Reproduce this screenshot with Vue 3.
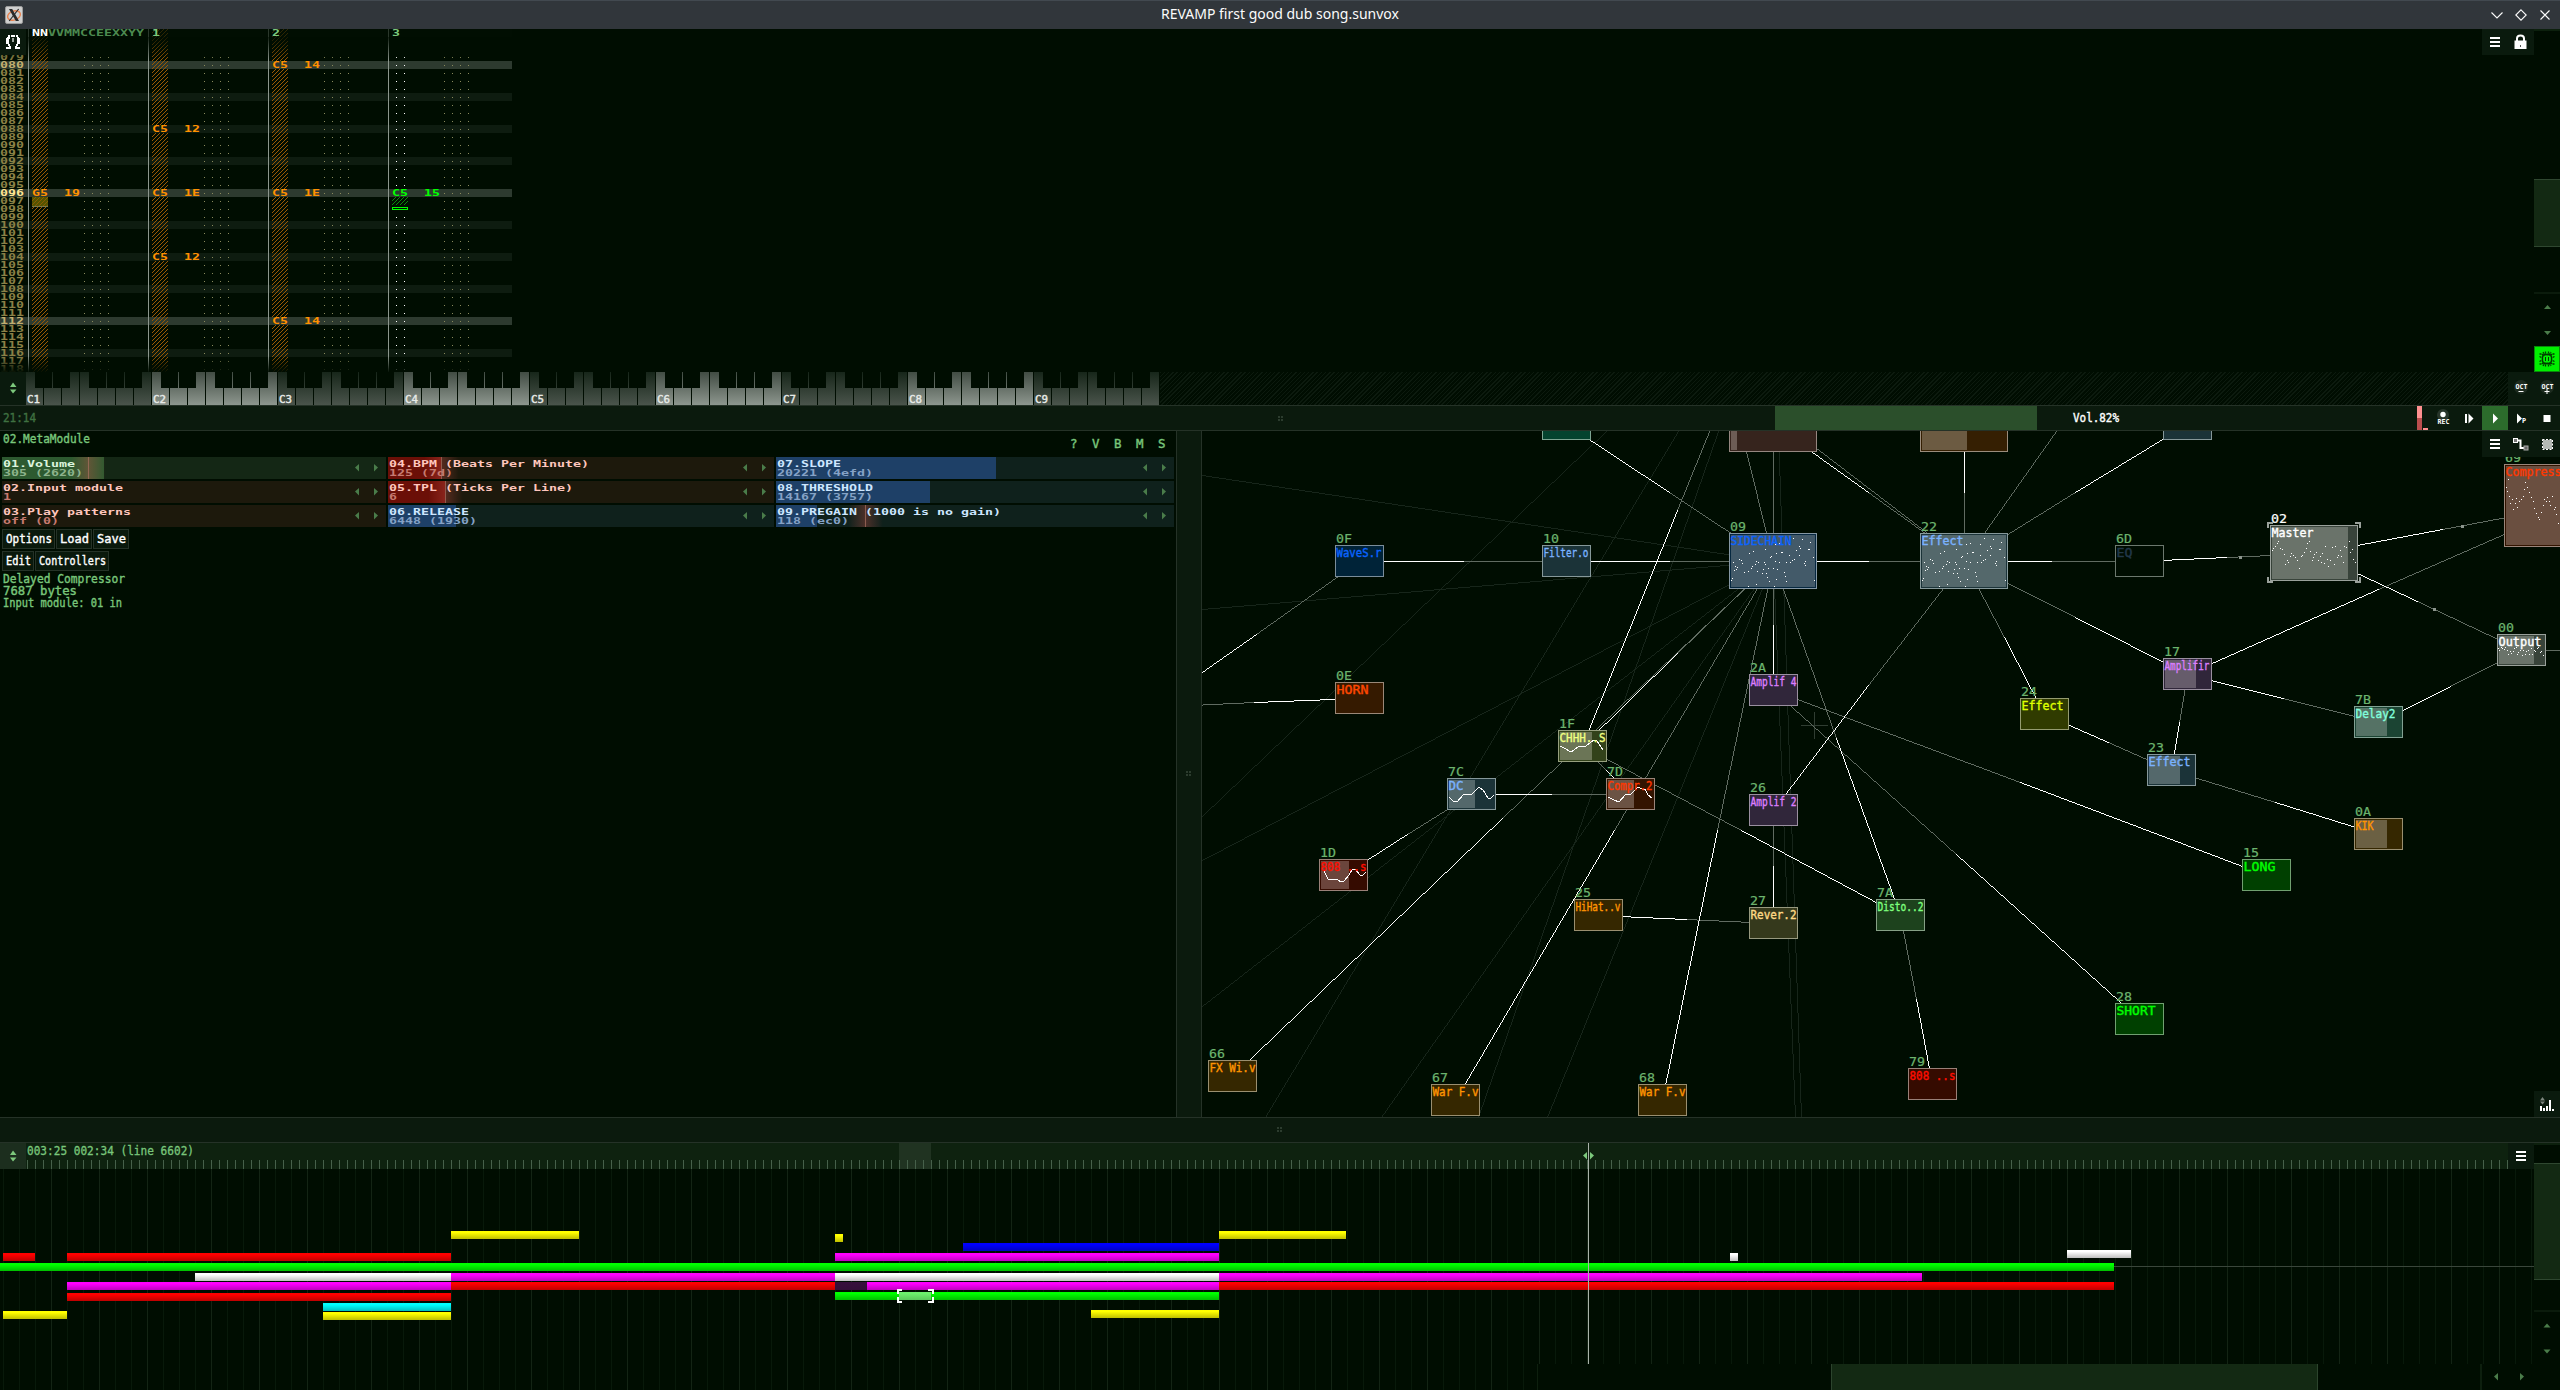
<script setup>
import { h } from 'vue'

// Stretched label: text t fitted to width w. wide = 8x8 fixed cell lettering.
const Px = (p) =>
  h('svg', { class: ['px', p.wide ? 'px-wide' : 'px-tall'], width: p.w + 2, height: p.h || 12 }, [
    h('text', { x: 0, y: p.b || 10, textLength: p.w, lengthAdjust: 'spacingAndGlyphs' }, p.t),
  ])
Px.props = { t: String, w: Number, h: Number, b: Number, wide: Boolean }

/* ---------- pattern editor ---------- */
const rows = Array.from({ length: 40 }, (_, i) => {
  const n = 79 + i
  return {
    n: String(n).padStart(3, '0'),
    y: 32 + (n - 80) * 8,
    beat: n % 4 === 0,
    bar: n % 16 === 0,
    now: n === 96,
  }
})
const tracks = [0, 1, 2, 3].map((i) => ({ x: 28 + i * 120, i }))
const notes = [
  [152, 88, 'C5', '12'], [152, 96, 'C5', '1E'], [152, 104, 'C5', '12'],
  [272, 80, 'C5', '14'], [272, 96, 'C5', '1E'], [272, 112, 'C5', '14'],
  [32, 96, 'G5', '19'], [392, 96, 'C5', '15', 'lime'],
].map(([x, r, a, b, c]) => ({ x, y: 39 + (r - 80) * 8, bar: r % 16 === 0, a, b, c: c ? '#00ff00' : '#ff9100' }))

const octaves = Array.from({ length: 9 }, (_, i) => i + 1)

/* ---------- controllers ---------- */
const controllers = [
  [
    { name: '01.Volume', val: '305 (2620)', kind: 'green', fill: 102, mark: 86 },
    { name: '02.Input module', val: '1', kind: 'red', fill: 0 },
    { name: '03.Play patterns', val: 'off (0)', kind: 'red', fill: 0 },
  ],
  [
    { name: '04.BPM (Beats Per Minute)', val: '125 (7d)', kind: 'red', fill: 53, mark: 53 },
    { name: '05.TPL (Ticks Per Line)', val: '6', kind: 'red', fill: 57, mark: 57 },
    { name: '06.RELEASE', val: '6448 (1930)', kind: 'blue', fill: 68 },
  ],
  [
    { name: '07.SLOPE', val: '20221 (4efd)', kind: 'blue', fill: 220 },
    { name: '08.THRESHOLD', val: '14167 (3757)', kind: 'blue', fill: 154 },
    { name: '09.PREGAIN (1000 is no gain)', val: '118 (ec0)', kind: 'blue', fill: 41, mark: 89 },
  ],
]
const flags = ['?', 'V', 'B', 'M', 'S']
const buttons = [
  [{ t: 'Options', w: 46, box: 53 }, { t: 'Load', w: 29, box: 36 }, { t: 'Save', w: 29, box: 36 }],
  [{ t: 'Edit', w: 25, box: 32 }, { t: 'Controllers', w: 67, box: 74 }],
]

/* ---------- modules ---------- */
const OR = ['#352700', '#ff9400', '#9a8f70']
const BL = ['#1b3338', '#7ab2ff', '#86989a']
const node = (id, x, y, name, tw, [fill, ink, line], o = {}) => ({ id, x, y, name, tw, fill, ink, line, w: 49, h: 32, ...o })
const PU = ['#30263a', '#dd7eff', '#9a8fa0']
const GR = ['#004000', '#00ff00', '#70a070']
const nodes = [
  node('', 1542, 408, '', 0, ['#04432f', '#fff', '#7da593']),
  node('', 1729, 396, '', 0, ['#36241d', '#fff', '#958680'], { w: 88, h: 56, lv: 6, lc: '#6d5d56' }),
  node('', 1920, 396, '', 0, ['#351f02', '#fff', '#9a8c7c'], { w: 88, h: 56, lv: 45, lc: '#6c5b42' }),
  node('', 2163, 408, '', 0, BL),
  node('0F', 1335, 545, 'WaveS.r', 45, ['#002338', '#0a64ff', '#7a8d9a']),
  node('10', 1542, 545, 'Filter.o', 45, BL),
  node('09', 1729, 533, 'SIDECHAIN', 61, ['#062840', '#0a64ff', '#8597a4'], { w: 88, h: 56, lv: 84, lc: '#435a69', dots: 'a' }),
  node('0E', 1335, 682, 'HORN', 32, ['#351a00', '#ff4800', '#9a8878']),
  node('1F', 1558, 730, 'CHHH..S', 46, ['#32421a', '#eeff80', '#97a07f'], { lv: 32, lc: '#6b7556', wave: '2,16 6,18 13,22 20,17 28,16 36,10 39,11 45,20' }),
  node('7C', 1447, 778, 'DC', 15, BL, { lv: 26, lc: '#54686b', wave: '2,19 6,23 10,24 17,16 25,16 32,9 36,12 41,20 44,20 47,17' }),
  node('7D', 1606, 778, 'Compr.2', 45, ['#331400', '#ff3800', '#9a857a'], { lv: 26, lc: '#6b5344', wave: '2,19 8,22 13,24 20,16 25,16 32,9 36,11 39,11 42,17 46,20' }),
  node('2A', 1749, 674, 'Amplif 4', 46, PU),
  node('26', 1749, 794, 'Amplif 2', 46, PU),
  node('27', 1749, 907, 'Rever.2', 46, ['#35391c', '#ffd985', '#97997f']),
  node('25', 1574, 899, 'HiHat..v', 45, OR),
  node('1D', 1319, 859, '808 ..s', 46, ['#350b00', '#ff0d00', '#9a8078'], { lv: 28, lc: '#6b453c', wave: '5,12 9,20 19,21 22,23 25,22 30,16 33,11 36,10 41,16 44,16 47,13' }),
  node('66', 1208, 1060, 'FX Wi.v', 46, OR),
  node('67', 1431, 1084, 'War F.v', 46, OR),
  node('68', 1638, 1084, 'War F.v', 46, OR),
  node('22', 1920, 533, 'Effect', 42, BL, { w: 88, h: 56, lv: 84, lc: '#54686b', dots: 'a' }),
  node('6D', 2115, 545, 'EQ', 16, ['#000d01', '#22384a', '#6c786e']),
  node('02', 2270, 525, 'Master', 42, ['#38433a', '#ffffff', '#9aa19b'], { w: 88, h: 56, lv: 76, lc: '#6a736a', dots: 'm', sel: true }),
  node('69', 2504, 464, 'Compress', 56, ['#331400', '#ff3800', '#9a857a'], { w: 132, h: 83, lv: 128, lc: '#6a4f40', dots: 'c' }),
  node('17', 2163, 658, 'Amplifir', 45, PU, { lv: 31, lc: '#665c6b' }),
  node('24', 2020, 698, 'Effect', 42, ['#303b00', '#dfff00', '#959c70']),
  node('23', 2147, 754, 'Effect', 42, BL, { lv: 31, lc: '#54686b' }),
  node('7B', 2354, 706, 'Delay2', 40, ['#1b4433', '#80ffdc', '#82a193'], { lv: 31, lc: '#557265' }),
  node('0A', 2354, 818, 'KIK', 18, OR, { lv: 31, lc: '#6b6043' }),
  node('15', 2242, 859, 'LONG', 32, GR),
  node('28', 2115, 1003, 'SHORT', 39, GR),
  node('7A', 1876, 899, 'Disto..2', 46, ['#1d421d', '#7dff7d', '#86a086']),
  node('79', 1908, 1068, '808 ..s', 46, ['#350b00', '#ff0d00', '#9a8078']),
  node('00', 2497, 634, 'Output', 43, ['#38433a', '#ffffff', '#9aa19b'], { lv: 35, lc: '#6a736a', dots: 'o' }),
]
const at = (k) => {
  if (Array.isArray(k)) return k
  const n = nodes.find((m) => m.id === k)
  return [n.x + n.w / 2, n.y + n.h / 2]
}
// One-pixel line as a path of whole-pixel runs.
const raster = (x1, y1, x2, y2) => {
  x1 = Math.floor(x1); y1 = Math.floor(y1); x2 = Math.floor(x2); y2 = Math.floor(y2)
  const steep = Math.abs(y2 - y1) > Math.abs(x2 - x1)
  let [a1, b1, a2, b2] = steep ? [y1, x1, y2, x2] : [x1, y1, x2, y2]
  if (a1 > a2) [a1, b1, a2, b2] = [a2, b2, a1, b1]
  const k = a2 === a1 ? 0 : (b2 - b1) / (a2 - a1)
  let d = ''
  let from = a1
  let cur = b1
  for (let a = a1; a <= a2 + 1; a++) {
    const b = Math.round(b1 + k * (a - a1))
    if (b !== cur || a > a2) {
      const len = a - from
      if (len > 0) d += steep ? `M${cur} ${from}h1v${len}h-1z` : `M${from} ${cur}h${len}v1h${-len}z`
      from = a
      cur = b
    }
  }
  return d
}
const A = [1566.5, 424], B = [1773, 424], C = [1964, 424], D = [2187.5, 424]
// signal goes from the first end: bright up to the middle, dim after it
const wires = [
  [A, '09'], [[1152.5, 707], '0F'], ['0F', '10'], ['10', '09'], ['09', '22'], ['0E', [1150, 707]],
  [B, '22'], [C, '22'], [D, '22'], ['22', '6D'], ['17', '22'], ['24', '22'], ['26', '22'],
  ['24', '23'], ['23', '17'], ['0A', '23'], ['17', '7B'], ['7B', '00'], ['17', '69'], ['02', '69'],
  ['6D', '02'], ['02', '00'], ['66', '09'], ['1F', '09'], ['1F', [1773, 274]], ['7D', '1F'], ['7A', '1F'],
  ['7C', '7D'], ['1D', '7C'], ['67', '09'], ['68', '09'], ['25', '27'], ['27', '26'], ['7A', '09'],
  ['15', '2A'], ['28', '2A'], ['79', '7A'], ['2A', '09'],
].map(([a, b]) => {
  const [x1, y1] = at(a), [x2, y2] = at(b)
  const mx = (x1 + x2) / 2, my = (y1 + y2) / 2
  return { bright: raster(x1, y1, mx, my), dim: raster(mx, my, x2, y2) }
})
const dimWires = [
  [1773, 440, 1773, 561], [1741, 431, 1773, 561], [1794, 431, 1964, 561], [2056, 431, 1964, 561], [2546, 650, 2560, 650],
].map((l) => raster(...l)).join('')
const ghostWires = [
  [1202, 475.5, 1773, 561], [1202, 609, 1773, 561], [1606, 431, 1202, 816], [1678.5, 431, 1265, 1117],
  [1718, 431, 1478, 1117], [1773, 561, 1202, 860], [1773, 561, 1202, 1006], [1773, 561, 1381, 1117],
  [1773, 561, 1547, 1117], [1778.5, 431, 1801, 1117], [1773, 561, 1795.5, 1117],
].map((l) => raster(...l)).join('')
const pts = (s, ox, oy, kx, ky) =>
  s.split(' ').map((p) => {
    const [x, y] = p.split(',').map(Number)
    return [Math.round((x - ox) / kx), Math.round((y - oy) / ky)]
  })
const scopes = {
  a: pts('823,115 850,118 874,126 810,134 782,131 768,134 842,140 845,146 868,149 870,149 832,152 740,148 703,154 690,160 786,157 789,157 773,160 755,172 758,170 812,165 842,165 882,172 660,178 667,182 643,187 671,190 711,184 718,187 708,193 736,187 738,194 770,184 781,187 802,187 814,187 827,178 820,182 858,184 855,190 858,196 650,199 655,203 652,208 647,211 697,205 699,199 748,206 733,208 715,214 687,214 677,217 729,220 742,220 762,205 775,208 796,217 800,229 745,232 752,244 803,244 772,238 640,235 637,241 712,253 687,259 767,259 886,241', 631, 100, 3, 3),
  m: pts('923,452 926,444 930,438 934,430 938,424 942,444 946,448 950,462 953,492 957,480 960,488 963,470 967,460 971,467 975,473 980,482 984,505 988,470 991,465 995,456 999,445 1003,430 1007,424 1008,455 1012,482 1015,472 1018,462 1022,458 1026,480 1030,470 1033,486 1036,460 1040,490 1043,440 1047,478 1050,498 1054,482 1058,442 1062,492 1065,440 1068,472 1072,465 1075,450 1079,470 1082,488 1085,440 1090,443 1096,424 1099,456 1102,447 1106,478 1109,486', 919, 376, 2.24, 3),
  c: pts('1448,262 1453,238 1451,275 1455,290 1458,312 1461,300 1465,328 1468,310 1471,295 1474,322 1478,306 1482,300 1486,290 1489,268 1492,248 1496,262 1500,278 1504,292 1508,305 1512,325 1516,340 1520,352 1523,360 1526,338 1531,318 1534,300 1537,305 1541,293 1544,305 1548,318 1551,290 1555,330 1558,322 1561,345 1564,372', 1444, 194, 2.24, 3),
  o: pts('1430,745 1433,752 1436,741 1440,746 1443,748 1447,741 1450,752 1453,764 1457,755 1460,760 1464,754 1467,745 1470,741 1473,762 1476,757 1480,752 1484,765 1487,750 1490,764 1493,755 1497,750 1500,764 1504,744 1507,762 1510,750 1514,754 1517,744 1520,741 1524,756 1527,754 1530,765', 1428, 703, 2.24, 3),
}

/* ---------- timeline ---------- */
const ticks = Array.from({ length: 311 }, (_, i) => 27 + i * 8)
const grid = Array.from({ length: 159 }, (_, i) => 3 + i * 16)
const strong = (x) => [51, 99, 147].includes(x % 160)
const Y = 'yellow', R = 'red', G = 'green', M = 'magenta', W = 'white'
const clips = [
  [451, 579, 1231, Y], [835, 843, 1234, Y], [1219, 1346, 1231, Y], [963, 1219, 1243, 'blue'],
  [3, 35, 1253, R], [67, 451, 1253, R], [835, 1219, 1253, M], [0, 2114, 1263, G],
  [195, 451, 1273, W], [451, 835, 1273, M], [835, 1219, 1273, W], [1219, 1922, 1273, M],
  [67, 451, 1282, M], [451, 835, 1282, R], [835, 867, 1282, 'muted'], [867, 1219, 1282, M], [1219, 2114, 1282, R],
  [67, 451, 1293, R], [835, 1219, 1292, G], [899, 931, 1292, 'picked'],
  [323, 451, 1303, 'cyan'], [323, 451, 1312, Y], [3, 67, 1311, Y], [1091, 1219, 1310, Y],
  [1730, 1738, 1253, W], [2067, 2131, 1250, W],
].map(([a, b, y, c]) => ({ x: a, w: b - a, y: y - 1143, c }))
const clipColors = {
  yellow: ['#ffff00', '#bfbf00'], red: ['#ff0000', '#bf0000'], green: ['#00ff00', '#00bf00'],
  magenta: ['#ff00ff', '#bf00bf'], white: ['#ffffff', '#bfbfbf'], blue: ['#0000ff', '#0000bf'],
  cyan: ['#00ffff', '#00bfbf'], muted: ['#37103c', '#330f38'], picked: ['#6cf06c', '#5bc85b'],
}
</script>

<template>
  <div class="app">
    <header class="title">
      <svg class="xlogo" width="18" height="18" viewBox="0 0 18 18">
        <rect x="0.5" y="0.5" width="17" height="17" rx="1.5" fill="#cfcfcf" stroke="#9b9b9b" />
        <ellipse cx="9" cy="9.5" rx="6.6" ry="4.4" fill="none" stroke="#e8824e" stroke-width="1.4" transform="rotate(-20 9 9.5)" />
        <path d="M4 3h3.200L14 15h-3.200z" fill="#2a2a2a" />
        <path d="M13.600 3L4.200 15" stroke="#2a2a2a" stroke-width="1.200" />
      </svg>
      <span class="title-text">REVAMP first good dub song.sunvox</span>
      <svg class="winbtns" width="64" height="14" viewBox="0 0 64 14" fill="none" stroke="#fcfcfc" stroke-width="1.100">
        <path d="M2.500 4.500l5.500 5.500 5.500-5.500" /><path d="M32 1.800l5.200 5.200-5.200 5.200-5.200-5.200z" />
        <path d="M51.500 2.500l9 9M60.500 2.500l-9 9" />
      </svg>
    </header>

    <section class="pattern">
      <svg class="grid" width="2482" height="343" shape-rendering="crispEdges">
        <defs>
          <pattern id="hatchO" width="4" height="4" patternUnits="userSpaceOnUse">
            <path d="M3 0h1v1h-1zM2 1h1v1h-1zM1 2h1v1h-1zM0 3h1v1h-1z" fill="#9c5a04" />
          </pattern>
          <pattern id="hatchG" width="4" height="4" patternUnits="userSpaceOnUse">
            <path d="M3 0h1v1h-1zM2 1h1v1h-1zM1 2h1v1h-1zM0 3h1v1h-1z" fill="#0c8a0c" />
          </pattern>
          <linearGradient id="fadeT" x1="0" y1="0" x2="0" y2="1"><stop offset="0" stop-color="#000d01" stop-opacity="0.85" /><stop offset="1" stop-color="#000d01" stop-opacity="0" /></linearGradient>
          <linearGradient id="fadeB" x1="0" y1="0" x2="0" y2="1"><stop offset="0" stop-color="#000d01" stop-opacity="0" /><stop offset="1" stop-color="#000d01" stop-opacity="0.95" /></linearGradient>
        </defs>
        <template v-for="r in rows" :key="r.n">
          <rect v-if="r.beat" x="0" :y="r.y" width="512" height="8" :fill="r.bar ? '#2d3a2f' : '#0e1c10'" />
        </template>
        <g v-for="t in tracks" :key="t.i">
          <rect :x="t.x" y="0" width="1" height="343" fill="#8c968d" />
          <rect v-if="t.i < 3" :x="t.x + 4" y="0" width="16" height="343" fill="url(#hatchO)" />
          <g v-for="r in rows" :key="r.n">
            <path :d="`M${t.x + 56} ${r.y + 4}h1v1h-1zM${t.x + 64} ${r.y + 4}h1v1h-1zM${t.x + 72} ${r.y + 4}h1v1h-1zM${t.x + 80} ${r.y + 4}h1v1h-1z`" fill="#8a8a5c" />
            <path v-if="t.i === 3 && !['096', '097', '098'].includes(r.n)" :d="`M${t.x + 8} ${r.y + 4}h1v1h-1zM${t.x + 16} ${r.y + 4}h1v1h-1z`" fill="#fff" />
          </g>
        </g>
        <rect v-for="(n, i) in notes" :key="'b' + i" :x="n.x" :y="n.y - 7" width="16" height="8" :fill="n.bar ? '#2d3a2f' : '#0e1c10'" />
        <rect x="32" y="168" width="16" height="10" fill="#5c5c00" fill-opacity="0.9" />
        <rect x="32" y="168" width="16" height="9" fill="url(#hatchO)" opacity="0.7" />
        <rect x="32" y="177" width="16" height="1" fill="#77774a" />
        <rect x="392" y="168" width="16" height="8" fill="url(#hatchG)" />
        <rect x="392.500" y="178.500" width="15" height="2" fill="none" stroke="#00ff00" />
        <g class="cells">
          <text v-for="r in rows" :key="r.n" x="0" :y="r.y + 7" textLength="24" lengthAdjust="spacingAndGlyphs" :fill="r.now ? '#ffe493' : r.bar ? '#c2af70' : '#8a8046'">{{ r.n }}</text>
          <g v-for="(n, i) in notes" :key="i" :fill="n.c">
            <text :x="n.x" :y="n.y" textLength="16" lengthAdjust="spacingAndGlyphs">{{ n.a }}</text>
            <text :x="n.x + 32" :y="n.y" textLength="16" lengthAdjust="spacingAndGlyphs">{{ n.b }}</text>
          </g>
        </g>
        <rect x="0" y="0" width="512" height="8" fill="#020f03" fill-opacity="0.7" />
        <rect x="0" y="8" width="512" height="24" fill="url(#fadeT)" />
        <rect x="0" y="327" width="512" height="16" fill="url(#fadeB)" />
        <g class="cells heads">
          <text x="32" y="7" textLength="16" lengthAdjust="spacingAndGlyphs" fill="#fff">NN</text>
          <text x="48" y="7" textLength="96" lengthAdjust="spacingAndGlyphs" fill="#4c8a50">VVMMCCEEXXYY</text>
          <text v-for="k in 3" :key="k" :x="32 + 120 * k" y="7" textLength="8" lengthAdjust="spacingAndGlyphs" fill="#7cc87c">{{ k }}</text>
        </g>
        <rect x="0" y="0" width="26" height="26" fill="#0a1a0d" />
        <path d="M8 6h2v2h-2zM11 6h4v2h-4zM16 6h2v2h-2zM7 8h3v2h-3zM6 9h3v6h-3zM17 8h2v1h-2zM17 9h3v6h-3zM8 15h2v2h-2zM16 15h2v2h-2zM9 17h2v2h-2zM15 17h2v2h-2zM6 18h5v2h-5zM15 18h5v2h-5z" fill="#fff" />
        <path d="M12 9h2v4h-2z" fill="#9aa29b" />
      </svg>
      <div class="iconbar">
        <svg class="ic" viewBox="0 0 26 26"><path d="M8 8h10v2H8zM8 12h10v2H8zM8 16h10v2H8z" fill="#fff" /></svg>
        <svg class="ic" viewBox="0 0 26 26"><path d="M9 13V9.500Q9 6.500 12.500 6.500T16 9.500V13" fill="none" stroke="#fff" stroke-width="2" /><rect x="6.500" y="11.500" width="12" height="8.500" fill="#fff" /><path d="M12 16h1v2h-1z" fill="#555" /></svg>
      </div>
      <div class="vscroll">
        <div class="strip"></div>
        <div class="thumb thumb-a"></div>
        <div class="divider div-a"></div>
        <svg class="ic" viewBox="0 0 26 26"><path d="M10 15l3.500-4 3.500 4z" fill="#4a7c4a" /></svg>
        <svg class="ic" viewBox="0 0 26 26"><path d="M10 11l3.500 4 3.500-4z" fill="#4a7c4a" /></svg>
        <svg class="ic bug" viewBox="0 0 26 26">
          <rect width="26" height="26" fill="#0a8a0a" /><rect x="1" y="1" width="24" height="24" fill="#00f000" />
          <g fill="none" stroke="#013a01" stroke-width="1.300">
            <rect x="8.500" y="8.500" width="9" height="9" rx="3" />
            <path d="M9 6l1.500 2.500h5L17 6M11.500 5.500v3M14.500 5.500v3M9 20l1.500-2.500h5L17 20M11.500 20.500v-3M14.500 20.500v-3M5.500 8h2.500l2 2M20.500 8H18l-2 2M5.500 10.500l3 1.500M20.500 10.500l-3 1.500M5.500 15.500l3-1.500M20.500 15.500l-3-1.500M5.500 18H8l2-2M20.500 18H18l-2-2" stroke-dasharray="2 0.500" />
          </g>
          <path d="M11 11h1v4h-1zM14 11h1v4h-1z" fill="#013a01" />
        </svg>
      </div>
    </section>

    <section class="keyboard">
      <svg class="ic tall" viewBox="0 0 26 33"><path d="M10 15l3-4.500 3.500 4.500zM10 17.500l3 4 3.500-4z" fill="#7cc87c" /></svg>
      <div v-for="o in octaves" :key="o" class="octave">
        <svg width="126" height="33" shape-rendering="crispEdges">
          <defs>
            <linearGradient :id="'kw' + o" x1="0" y1="0" x2="0" y2="1">
              <stop offset="0" :stop-color="o % 2 ? '#17261a' : '#414c43'" /><stop offset="1" :stop-color="o % 2 ? '#4a544b' : '#8d968e'" />
            </linearGradient>
          </defs>
          <rect v-for="k in 7" :key="k" :x="(k - 1) * 18" y="0" width="17" height="33" :fill="`url(#kw${o})`" />
          <rect v-for="x in [9, 27, 63, 81, 99]" :key="x" :x="x" y="0" width="17" height="16" fill="#000d01" />
        </svg>
        <Px class="keyname" :t="'C' + o" :w="13" :h="11" :b="9" />
      </div>
      <div class="hatch"></div>
      <svg class="ic tall" viewBox="0 0 26 33"><circle cx="13" cy="15" r="7" fill="#fff" opacity="0.08" /><text x="7.500" y="16.500" textLength="12" lengthAdjust="spacingAndGlyphs" class="tiny">OCT</text><path d="M10.500 19h5v1h-5z" fill="#fff" /></svg>
      <svg class="ic tall" viewBox="0 0 26 33"><circle cx="13" cy="15" r="7" fill="#fff" opacity="0.08" /><text x="7.500" y="16.500" textLength="12" lengthAdjust="spacingAndGlyphs" class="tiny">OCT</text><path d="M10.500 19h5v1h-5zM12.500 17h1v5h-1z" fill="#fff" /></svg>
    </section>

    <section class="transport">
      <Px class="clock" t="21:14" :w="33" :h="13" :b="11" />
      <svg class="grip" width="6" height="6"><path d="M0 0h2v2H0zM3 0h2v2H3zM0 3h2v2H0zM3 3h2v2H3z" fill="#2c3c2e" /></svg>
      <div class="volbar"></div>
      <Px class="vol" t="Vol.82%" :w="46" :h="13" :b="11" />
      <svg class="meter" width="13" height="24"><path d="M0 0h5v12H0z" fill="#ff9090" /><path d="M0 12h5v12H0z" fill="#bb4e4e" /><path d="M6 22h5v2H6z" fill="#ff9090" /></svg>
      <svg class="ic" viewBox="0 0 26 24"><circle cx="13" cy="9" r="6" fill="#fff" opacity="0.12" /><circle cx="13" cy="8.500" r="2.700" fill="#fff" /><text x="7.500" y="17.500" textLength="12" lengthAdjust="spacingAndGlyphs" class="tiny">REC</text></svg>
      <svg class="ic" viewBox="0 0 26 24"><path d="M9 8h2v9H9zM12.500 7.500v10l5-5z" fill="#fff" /></svg>
      <svg class="ic playing" viewBox="0 0 26 24"><path d="M11 7.500v10l5-5z" fill="#fff" /></svg>
      <svg class="ic" viewBox="0 0 26 24"><path d="M9 7.500v10l5-5z" fill="#fff" /><text x="14" y="16.500" class="tiny">P</text></svg>
      <svg class="ic" viewBox="0 0 26 24"><path d="M9.500 9h7v7h-7z" fill="#fff" /></svg>
    </section>

    <section class="middle">
      <div class="panel">
        <div class="panel-head">
          <Px t="02.MetaModule" :w="87" :h="14" :b="12" />
          <div class="flags"><span v-for="f in flags" :key="f"><Px :t="f" :w="7.500" :h="12" :b="10" /></span></div>
        </div>
        <div class="ctls">
          <div v-for="(col, ci) in controllers" :key="ci" class="ctl-col">
            <div v-for="c in col" :key="c.name" class="ctl" :class="c.kind">
              <div class="fill" :style="{ width: c.fill + 'px' }"></div>
              <div v-if="c.mark" class="mark" :style="{ left: c.mark + 'px' }"></div>
              <div class="ctl-text">
                <Px :t="c.name" :w="c.name.length * 8" wide :h="11" :b="10" />
                <Px class="val" :t="c.val" :w="c.val.length * 8" wide :h="10" :b="8" />
              </div>
              <svg class="nudge" width="34" height="22"><path d="M5 7l-4 3.500 4 4zM20 7l4 3.500-4 4z" fill="#4a7c4a" /></svg>
            </div>
          </div>
        </div>
        <div v-for="(line, i) in buttons" :key="i" class="btns">
          <div v-for="b in line" :key="b.t" class="btn" :style="{ width: b.box + 'px' }"><Px :t="b.t" :w="b.w" :h="16" :b="11" /></div>
        </div>
        <div class="info">
          <Px t="Delayed Compressor" :w="122" :h="12" :b="10" />
          <Px t="7687 bytes" :w="74" :h="12" :b="10" />
          <Px t="Input module: 01 in" :w="119" :h="12" :b="10" />
        </div>
      </div>

      <div class="splitter"><svg width="6" height="6"><path d="M0 0h2v2H0zM3 0h2v2H3zM0 3h2v2H0zM3 3h2v2H3z" fill="#2c3c2e" /></svg></div>

      <div class="graph">
        <svg width="1358" height="686" viewBox="1202 431 1358 686" shape-rendering="crispEdges">
          <path :d="ghostWires" fill="#17251a" />
          <path d="M1801 725h27v1h-27zM1814 712h1v27h-1z" fill="#303d32" />
          <path :d="dimWires" fill="#606b61" />
          <path v-for="(w, i) in wires" :key="'e' + i" :d="w.dim" fill="#606b61" />
          <path v-for="(w, i) in wires" :key="'w' + i" :d="w.bright" fill="#fff" />
          <path d="M2239 556h3v3h-3zM2461 525h3v3h-3zM2433 608h3v3h-3z" fill="#8c958d" />
          <g v-for="(n, i) in nodes" :key="i">
            <rect :x="n.x + 0.5" :y="n.y + 0.5" :width="n.w - 1" :height="n.h - 1" :fill="n.fill" :stroke="n.line" />
            <rect v-if="n.lv" :x="n.x + 2" :y="n.y + 2" :width="n.lv" :height="n.h - 4" :fill="n.lc" />
            <path v-if="n.dots" :d="scopes[n.dots].map(([a, b]) => `M${n.x + a} ${n.y + b}h1v1h-1z`).join('')" fill="#fff" />
            <polyline v-if="n.wave" :points="n.wave" :transform="`translate(${n.x} ${n.y})`" fill="none" stroke="#fff" />
            <g v-if="n.id" class="node-text">
              <text :x="n.x + 1" :y="n.y - 2" textLength="16" lengthAdjust="spacingAndGlyphs" class="node-id" :fill="n.sel ? '#fff' : '#6cb46e'" :stroke="n.sel ? '#fff' : '#6cb46e'">{{ n.id }}</text>
              <text :x="n.x + 1.500" :y="n.y + 12" :textLength="n.tw" lengthAdjust="spacingAndGlyphs" :fill="n.ink" :stroke="n.ink">{{ n.name }}</text>
            </g>
            <path v-if="n.sel" d="M2268 528v-5h5M2355 523h5v5M2360 577v5h-5M2273 582h-5v-5" fill="none" stroke="#9aa19b" stroke-width="2" />
          </g>
        </svg>
        <div class="graph-tools">
          <svg class="ic" viewBox="0 0 26 26"><path d="M8 8h10v2H8zM8 12h10v2H8zM8 16h10v2H8z" fill="#fff" /></svg>
          <svg class="ic" viewBox="0 0 26 26"><path d="M9 9.500h3.500v7.500h4" fill="none" stroke="#fff" stroke-width="2" /><rect x="5.500" y="7.500" width="4" height="4" fill="#777" stroke="#fff" /><rect x="16" y="15" width="4" height="4" fill="#666" stroke="#aaa" /></svg>
          <svg class="ic" viewBox="0 0 26 26"><rect x="8.500" y="8.500" width="10" height="10" fill="#b4b9b4" stroke="#0a1a0d" /><rect x="8.500" y="8.500" width="10" height="10" fill="none" stroke="#fff" stroke-dasharray="2 1.500" /></svg>
        </div>
        <div class="graph-corner">
          <svg class="ic" viewBox="0 0 26 26"><path d="M6 9.500l2.500-3.500 2.500 3.500zM6 10.500l2.500 3 2.500-3z" fill="#7b847c" /><path d="M6 15h2v5H6zM9 17h2v3H9zM12 15h2v5h-2zM15 9h2v11h-2zM18 18h2v2h-2z" fill="#fff" /></svg>
        </div>
      </div>
    </section>

    <section class="bar2">
      <svg width="6" height="6"><path d="M0 0h2v2H0zM3 0h2v2H3zM0 3h2v2H0zM3 3h2v2H3z" fill="#2c3c2e" /></svg>
    </section>

    <section class="timeline">
      <svg class="tl" width="2534" height="247" shape-rendering="crispEdges">
        <defs>
          <linearGradient v-for="(c, k) in clipColors" :id="'c-' + k" :key="k" x1="0" y1="0" x2="0" y2="1"><stop offset="0.2" :stop-color="c[0]" /><stop offset="1" :stop-color="c[1]" /></linearGradient>
        </defs>
        <rect width="2508" height="26" fill="#0e220f" />
        <path v-for="x in grid" :key="x" :d="`M${x} 26h1v221h-1z`" :fill="strong(x) ? '#132414' : '#08190a'" />
        <rect width="26" height="26" fill="#1c2e1e" />
        <path d="M10 12l3-4.500 3.500 4.500zM10 14.500l3 4 3.500-4z" fill="#7cc87c" shape-rendering="auto" />
        <rect x="899" width="32" height="26" fill="#203321" />
        <path :d="ticks.filter((x) => x < 2508).map((x) => `M${x} 17h1v9h-1z`).join('')" fill="#46604a" />
        <text x="27" y="12" textLength="167" lengthAdjust="spacingAndGlyphs" class="tl-text">003:25 002:34 (line 6602)</text>
        <rect y="123" width="2534" height="1" fill="#3a463b" />
        <rect v-for="(c, i) in clips" :key="i" :x="c.x" :y="c.y" :width="c.w" height="8" :fill="`url(#c-${c.c})`" />
        <path d="M898 151v-4h4M928 147h5v4M933 154v5h-5M902 159h-4v-5" fill="none" stroke="#fff" stroke-width="2" />
        <rect x="1537" y="221" width="997" height="26" fill="#000d01" />
        <rect x="1537" y="221" width="1" height="26" fill="#0d1f0e" />
        <rect x="1831" y="221" width="487" height="26" fill="#132913" /><path d="M1831 221h1v26h-1zM2317 221h1v26h-1z" fill="#2c442d" />
        <rect x="2480" y="221" width="2" height="26" fill="#0d1f0e" />
        <path d="M2498 230l-4 3.500 4 4zM2520 230l4 3.500-4 4z" fill="#4a7c4a" shape-rendering="auto" />
        <rect x="1588" width="1" height="221" fill="#aab3aa" />
        <path d="M1587 9l-4 3.500 4 4zM1590 9l4 3.500-4 4z" fill="#7cc87c" shape-rendering="auto" />
        <rect x="2508" width="26" height="26" fill="#0a1a0d" />
        <path d="M2516 8h10v2h-10zM2516 12h10v2h-10zM2516 16h10v2h-10z" fill="#fff" />
      </svg>
      <div class="vscroll">
        <div class="strip"></div>
        <div class="thumb thumb-b"></div>
        <div class="divider div-b"></div>
        <svg class="ic" viewBox="0 0 26 26"><path d="M9.500 15.500l3.500-4 3.500 4z" fill="#4a7c4a" /></svg>
        <svg class="ic" viewBox="0 0 26 26"><path d="M9.500 11.500l3.500 4 3.500-4z" fill="#4a7c4a" /></svg>
      </div>
    </section>
  </div>
</template>

<style>
body { background: #000d01; overflow: hidden; }
.px { display: block; flex: none; overflow: visible; fill: currentColor; }
.px text { white-space: pre; }
.px-tall text { font: 12.5px "DejaVu Sans Mono", monospace; stroke: currentColor; stroke-width: 0.4px; }
.px-wide text { font: bold 9.2px "DejaVu Sans Mono", monospace; }
</style>

<style scoped>
.app { width: 2560px; height: 1390px; display: flex; flex-direction: column; background: #000d01; overflow: hidden; font-family: "DejaVu Sans Mono", monospace; }
svg { display: block; flex: none; }
.ic { width: 26px; height: 26px; background: #0a1a0d; }
.tiny { font: bold 6.8px "DejaVu Sans Mono", monospace; fill: #fff; }

.title { height: 29px; flex: none; box-sizing: border-box; display: flex; align-items: center; justify-content: space-between; background: #31363b; border-top: 1px solid #424950; padding: 0 7px 0 5px; position: relative; }
.title-text { font: 14px/28px "Noto Sans", sans-serif; color: #fcfcfc; position: absolute; left: 1161px; top: -1px; white-space: nowrap; }

.pattern { height: 343px; flex: none; display: flex; }
.iconbar { display: flex; width: 52px; }
.vscroll { width: 26px; flex: none; display: flex; flex-direction: column; }
.vscroll .ic { background: none; }
.strip { height: 2px; background: #0c200d; }
.thumb { background: #132913; border-top: 1px solid #2f4730; border-bottom: 1px solid #2f4730; box-sizing: border-box; flex: none; }
.thumb-a { margin-top: 148px; height: 68px; }
.div-a { margin-top: 45px; }
.divider { height: 2px; background: #0b1b0c; flex: none; }

.keyboard { height: 33px; flex: none; display: flex; }
.tall { height: 33px; }
.octave { width: 126px; height: 33px; position: relative; color: #e8ebe8; }
.keyname { position: absolute; left: 1px; bottom: 0; }
.keyname :deep(text) { font-size: 10.5px; }
.hatch { flex: 1; background: repeating-linear-gradient(135deg, #0c1a0e 0 1px, #000d01 1px 3px); }

.transport { height: 26px; flex: none; box-sizing: border-box; border-top: 1px solid #253227; border-bottom: 1px solid #253227; background: #0b1a0d; display: flex; color: #fff; }
.transport .ic { height: 24px; }
.clock { margin: 5px 0 0 3px; color: #3f7141; }
.grip { margin: 10px 0 0 1240px; }
.volbar { width: 262px; height: 24px; margin-left: 491px; background: #2b4f2b; }
.vol { margin: 5px 0 0 36px; }
.meter { margin-left: 296px; }
.transport .playing { background: #2c6c2c; }

.middle { height: 686px; flex: none; display: flex; }
.panel { width: 1176px; height: 686px; flex: none; box-sizing: border-box; padding-left: 2px; color: #79c67b; }
.panel-head { height: 26px; display: flex; justify-content: space-between; padding-left: 1px; box-sizing: border-box; }
.flags { display: flex; margin: 7px 2px 0 0; }
.flags span { width: 22px; display: flex; justify-content: center; }
.ctls { display: grid; grid-template-columns: 384px 386px 398px; column-gap: 2px; }
.ctl-col { display: flex; flex-direction: column; gap: 2px; }
.ctl { position: relative; height: 22px; display: flex; justify-content: space-between; overflow: hidden; }
.ctl-text { position: relative; padding-left: 1px; }
.nudge { position: relative; width: 34px; left: 2px; }
.fill { position: absolute; left: 0; top: 0; bottom: 0; }
.mark { position: absolute; top: 0; bottom: 0; width: 1px; background: #98806f; opacity: 0.8; }
.mark::before { content: ""; position: absolute; left: -17px; width: 35px; top: 0; bottom: 0; background: linear-gradient(90deg, transparent, rgba(200, 80, 70, 0.42), transparent); }
.ctl.green { background: #142715; color: #dcf3dc; }
.ctl.green .fill { background: #2d5a30; }
.ctl.green .val { color: #8db38c; }
.ctl.red { background: #1d190c; color: #ffc6bd; }
.ctl.red .fill { background: #6b0f07; }
.ctl.red .val { color: #c67a70; }
.ctl.blue { background: #0f211c; color: #cde6ff; }
.ctl.blue .fill { background: #1e4067; }
.ctl.blue .val { color: #85a2c6; }
.btns { display: flex; gap: 1px; margin-top: 2px; }
.btn { height: 20px; box-sizing: border-box; border: 1px solid #253227; background: #0a190c; color: #fff; padding: 2px 0 0 3px; }
.info { padding: 2px 0 0 1px; }

.splitter { width: 26px; box-sizing: border-box; flex: none; background: #0b1a0d; border-left: 1px solid #253227; border-right: 1px solid #253227; display: flex; align-items: center; justify-content: center; }
.graph { width: 1358px; height: 686px; position: relative; overflow: hidden; }
.node-text text { font: 12.5px "DejaVu Sans Mono", monospace; stroke-width: 0.4px; white-space: pre; }
.node-text .node-id { font-size: 12px; stroke-width: 0.2px; }
.graph-tools { position: absolute; right: 0; top: 0; display: flex; }
.graph-corner { position: absolute; right: 0; bottom: 0; }

.bar2 { height: 26px; flex: none; box-sizing: border-box; background: #0b1a0d; border-top: 1px solid #253227; border-bottom: 1px solid #253227; display: flex; align-items: center; justify-content: center; }
.timeline { height: 247px; flex: none; display: flex; }
.tl-text { font: 12.5px "DejaVu Sans Mono", monospace; fill: #79c67b; stroke: #79c67b; stroke-width: 0.3px; }
.thumb-b { margin-top: 18px; height: 117px; }
.div-b { margin-top: 30px; }
.cells { font: bold 9.3px "DejaVu Sans Mono", monospace; }
.heads { font-size: 9.5px; }
</style>
